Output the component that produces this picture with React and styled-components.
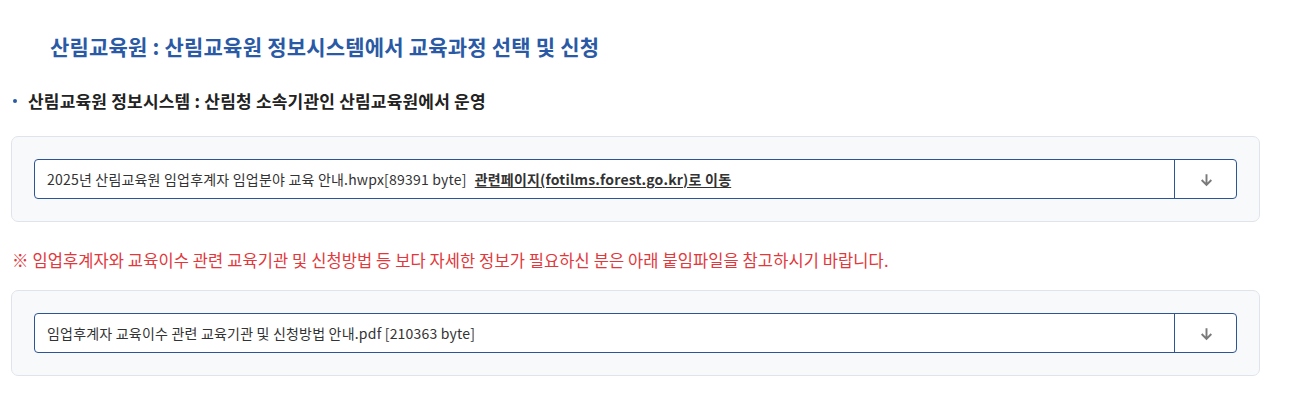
import styled, { createGlobalStyle } from 'styled-components'

const GlobalStyle = createGlobalStyle`
  body {
    margin: 0;
    background: #fff;
    font-family: 'Noto Sans CJK KR', 'Noto Sans', sans-serif;
    color: #222;
  }
`

const Page = styled.div`
  width: 1305px;
  padding: 28px 0 0 11px;
  box-sizing: border-box;
`

const Title = styled.h2`
  margin: 0 0 0 39px;
  font-size: 21px;
  font-weight: 700;
  color: #2a5aa5;
  line-height: 36px;
  letter-spacing: 0.2px;
`

const Bullet = styled.p`
  display: flex;
  align-items: center;
  gap: 11px;
  margin: 23px 0 0 2px;
  font-size: 17px;
  font-weight: 700;
  line-height: 28px;
  letter-spacing: 0.2px;
  color: #222;
  &::before {
    content: '';
    width: 4px;
    height: 4px;
    border-radius: 50%;
    background: #2a5aa5;
  }
`

const FileBox = styled.div`
  width: 1249px;
  box-sizing: border-box;
  margin-top: ${p => p.$top}px;
  padding: 22px;
  background: #f8f9fb;
  border: 1px solid #dfe4ec;
  border-radius: 7px;
`

const FileRow = styled.div`
  display: flex;
  height: 38px;
  background: #fff;
  border: 1px solid #2c5597;
  border-radius: 4px;
`

const FileName = styled.div`
  flex: 1;
  display: flex;
  align-items: center;
  padding-left: 12px;
  font-size: 14px;
  color: #333;
  letter-spacing: 0.2px;
  white-space: nowrap;
`

const LinkText = styled.a`
  margin-left: 8px;
  font-weight: 700;
  color: #333;
  letter-spacing: 0.2px;
  text-decoration: underline;
  text-underline-offset: 2px;
`

const DownButton = styled.button`
  width: 62px;
  border: 0;
  border-left: 1px solid #2c5597;
  background: transparent;
  display: flex;
  align-items: center;
  justify-content: center;
  padding: 0 0 0 2px;
  cursor: pointer;
`

const Notice = styled.p`
  margin: 21px 0 0 1px;
  font-size: 16.5px;
  line-height: 34px;
  color: #e2373b;
  letter-spacing: 0.1px;
`

const DownIcon = () => (
  <svg width="15" height="15" viewBox="0 0 14 14" fill="none">
    <path d="M7 2v10M2.5 7.5 7 12l4.5-4.5" stroke="#7a7a7a" strokeWidth="1.8" />
  </svg>
)

const File = ({ top, name, link }) => (
  <FileBox $top={top}>
    <FileRow>
      <FileName>
        {name}
        {link && <LinkText>{link}</LinkText>}
      </FileName>
      <DownButton aria-label="다운로드">
        <DownIcon />
      </DownButton>
    </FileRow>
  </FileBox>
)

export default function App() {
  return (
    <>
      <GlobalStyle />
      <Page>
        <Title>산림교육원 : 산림교육원 정보시스템에서 교육과정 선택 및 신청</Title>
        <Bullet>산림교육원 정보시스템 : 산림청 소속기관인 산림교육원에서 운영</Bullet>
        <File
          top={21}
          name="2025년 산림교육원 임업후계자 임업분야 교육 안내.hwpx[89391 byte]"
          link="관련페이지(fotilms.forest.go.kr)로 이동"
        />
        <Notice>※ 임업후계자와 교육이수 관련 교육기관 및 신청방법 등 보다 자세한 정보가 필요하신 분은 아래 붙임파일을 참고하시기 바랍니다.</Notice>
        <File top={13} name="임업후계자 교육이수 관련 교육기관 및 신청방법 안내.pdf [210363 byte]" />
      </Page>
    </>
  )
}
